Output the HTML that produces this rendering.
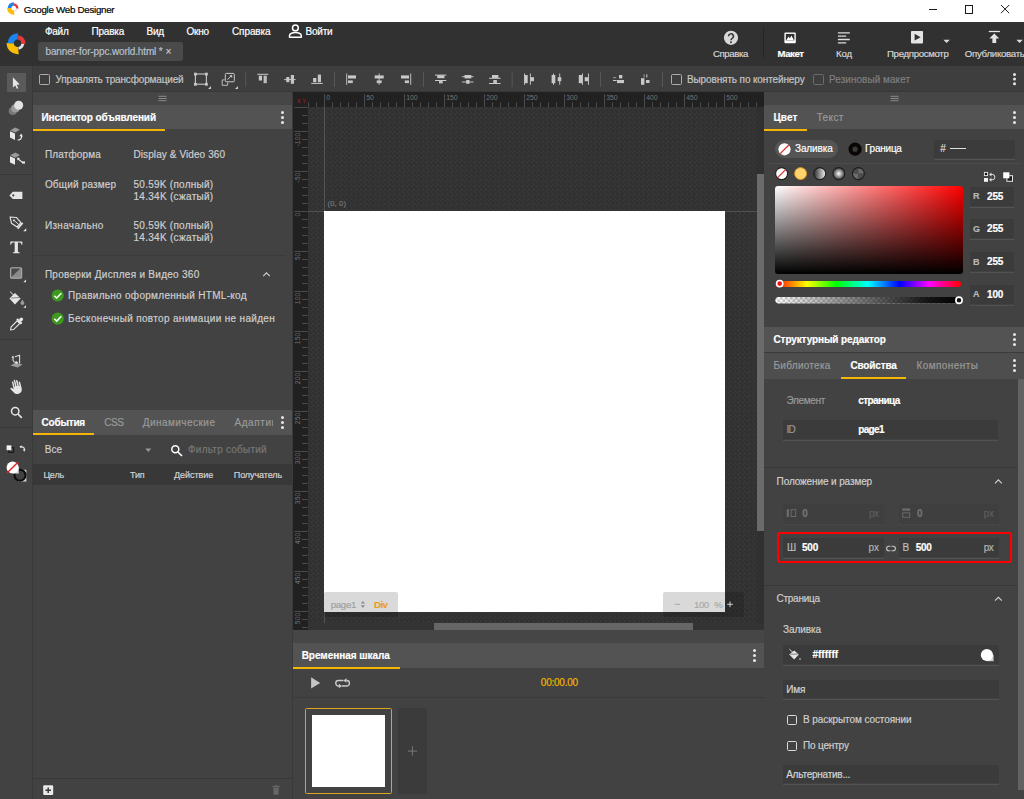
<!DOCTYPE html>
<html><head><meta charset="utf-8">
<style>
*{box-sizing:border-box;margin:0;padding:0}
html,body{width:1024px;height:799px;overflow:hidden;background:#424242;font-family:"Liberation Sans",sans-serif;font-size:10px;color:#dcdcdc}
.a,svg{position:absolute}
.t{position:absolute;white-space:nowrap;line-height:12px;-webkit-text-stroke:.18px currentColor}
.ph{position:absolute;background:#535353}
.yl{position:absolute;height:2px;background:#f4b400}
.ln{position:absolute;height:1px;background:#373737}
.fld{position:absolute;background:#3b3b3b;background-clip:content-box;padding-bottom:1px;border-bottom:1px solid #525252}
.cb{position:absolute;width:11px;height:11px;border:1.500px solid #adadad;border-radius:1.600px}
.kb{position:absolute;width:3px;height:3px;border-radius:50%;background:#e6e6e6;box-shadow:0 5px 0 #e6e6e6,0 10px 0 #e6e6e6}
.sep{position:absolute;width:1px;background:#555}
#stage{left:293px;top:92px;width:471px;height:538px;background:repeating-conic-gradient(#2f2f2f 0 25%,#373737 0 50%) 0 0/4.800px 4.800px;overflow:hidden}
</style></head><body>
<!-- title bar -->
<div class="a" style="left:0;top:0;width:1024px;height:22px;background:#fff"></div>
<!-- header -->
<div class="a" style="left:0;top:22px;width:1024px;height:44px;background:#313131"></div>
<div class="a" style="left:38px;top:42px;width:145px;height:19px;background:#4a4a4a;border-radius:2px"></div>
<div class="sep" style="left:763px;top:27px;height:31px;background:#252525"></div>
<!-- options bar -->
<div class="a" style="left:0;top:66px;width:1024px;height:26px;background:#3e3e3e"></div>
<div class="a" style="left:33px;top:91.400px;width:991px;height:1px;background:#373737"></div>
<!-- tools column -->
<div class="a" style="left:0;top:66px;width:33px;height:733px;background:#424242;border-right:1px solid #393939"></div>
<div class="a" style="left:6.600px;top:73px;width:19px;height:19px;background:#5a5a5a"></div>
<div class="ln" style="left:0;top:174px;width:33px"></div>
<div class="ln" style="left:0;top:339px;width:33px"></div>
<div class="ln" style="left:0;top:427px;width:33px"></div>
<!-- left panel -->
<div class="a" style="left:33px;top:92px;width:259px;height:13px;background:#464646"></div>
<div class="ph" style="left:33px;top:105px;width:259px;height:24px"></div>
<div class="yl" style="left:33px;top:129px;width:132px"></div>
<div class="kb" style="left:281px;top:111px"></div>
<div class="ln" style="left:33px;top:255px;width:253px;background:#3b3b3b"></div>
<div class="ph" style="left:33px;top:410px;width:259px;height:25px"></div>
<div class="yl" style="left:33px;top:433.300px;width:61.300px"></div>
<div class="kb" style="left:281px;top:416px"></div>
<div class="a" style="left:33px;top:464px;width:259px;height:21px;background:#383838"></div>
<div class="ln" style="left:33px;top:778px;width:259px;background:#383838"></div>
<div class="a" style="left:292px;top:92px;width:1px;height:707px;background:#3a3a3a"></div>
<!-- stage -->
<div id="stage" class="a">
 <div class="a" style="left:31px;top:15px;width:1px;height:516px;background:#545454"></div>
 <div class="a" style="left:15px;top:119px;width:449px;height:1px;background:#525252"></div>
 <div class="a" style="left:31px;top:119.200px;width:400.700px;height:400.700px;background:#fff"></div>
 <div class="a" style="left:0;top:0;width:471px;height:15px;background:#212121"></div>
 <div class="a" style="left:0;top:15px;width:14.600px;height:523px;background:#212121"></div>
 <div class="a" style="left:31px;top:500px;width:74px;height:24.500px;background:rgba(0,0,0,.15);border-radius:2px"></div>
 <div class="a" style="left:370px;top:500px;width:81px;height:25px;background:rgba(0,0,0,.15);border-radius:2px"></div>
 <div class="a" style="left:464px;top:15px;width:7px;height:516px;background:#303030"></div>
 <div class="a" style="left:464px;top:82px;width:7px;height:357px;background:#6b6b6b"></div>
 <div class="a" style="left:14.600px;top:530.800px;width:457px;height:7.200px;background:#333"></div>
 <div class="a" style="left:141.400px;top:530.800px;width:259px;height:7.200px;background:#666"></div>
</div>
<!-- timeline -->
<div class="a" style="left:293px;top:630px;width:471px;height:13px;background:#464646"></div>
<div class="ph" style="left:293px;top:643px;width:471px;height:25px"></div>
<div class="yl" style="left:293px;top:666.500px;width:106.600px"></div>
<div class="kb" style="left:753px;top:649px"></div>
<div class="ln" style="left:293px;top:697px;width:471px;background:#393939"></div>
<div class="a" style="left:305px;top:707.700px;width:87px;height:86.500px;border:1px solid #dba520;border-radius:1.500px"></div>
<div class="a" style="left:312px;top:715px;width:72.700px;height:72.200px;background:#fff"></div>
<div class="a" style="left:398.300px;top:707.700px;width:28.400px;height:86.500px;background:#3b3b3b;border-radius:2px"></div>
<!-- right panel -->
<div class="a" style="left:764px;top:92px;width:260px;height:13px;background:#464646"></div>
<div class="ph" style="left:764px;top:105px;width:260px;height:24px"></div>
<div class="yl" style="left:764px;top:129px;width:43px"></div>
<div class="kb" style="left:1013px;top:111px"></div>
<div class="a" style="left:775px;top:140px;width:63px;height:18px;border-radius:9px;background:#555"></div>
<div class="fld" style="left:934px;top:140.300px;width:81px;height:19.400px"></div>
<div class="a" style="left:950px;top:148px;width:16px;height:1px;background:#ddd"></div>
<div class="ln" style="left:768px;top:162.500px;width:252px;background:#4c4c4c"></div>
<div class="a" style="left:775.200px;top:186.400px;width:188px;height:88px;border-radius:3px;background:linear-gradient(to top,#000,rgba(0,0,0,0)),linear-gradient(to right,#fff,#f00)"></div>
<div class="a" style="left:775.400px;top:280.700px;width:186px;height:6.800px;border-radius:3.400px;background:linear-gradient(to right,#f00,#ff0 17%,#0f0 33%,#0ff 50%,#00f 67%,#f0f 83%,#f00)"></div>
<div class="fld" style="left:969.600px;top:187px;width:44.700px;height:20.500px"></div>
<div class="fld" style="left:969.600px;top:219px;width:44.700px;height:20.500px"></div>
<div class="fld" style="left:969.600px;top:252.100px;width:44.700px;height:20.500px"></div>
<div class="fld" style="left:969.600px;top:285px;width:44.700px;height:20.500px"></div>
<div class="ph" style="left:764px;top:327px;width:260px;height:25px"></div>
<div class="kb" style="left:1013px;top:333px"></div>
<div class="a" style="left:764px;top:352px;width:260px;height:27px;background:#4e4e4e;border-top:1px solid #3a3a3a"></div>
<div class="yl" style="left:841px;top:377px;width:65px"></div>
<div class="kb" style="left:1013px;top:359px"></div>
<div class="a" style="left:1017.500px;top:378.600px;width:6.500px;height:411px;background:#626262"></div>
<div class="fld" style="left:783px;top:420px;width:215px;height:20.500px"></div>
<div class="ln" style="left:764px;top:467px;width:253px"></div>
<div class="fld" style="left:783px;top:504px;width:101px;height:20.500px;background:#3f3f3f;border-bottom:1px dotted #4d4d4d"></div>
<div class="fld" style="left:899px;top:504px;width:100px;height:20.500px;background:#3f3f3f;border-bottom:1px dotted #4d4d4d"></div>
<div class="fld" style="left:783px;top:538px;width:101px;height:20.500px"></div>
<div class="fld" style="left:899px;top:538px;width:100px;height:20.500px"></div>
<div class="a" style="left:777px;top:531.5px;width:234.5px;height:31.5px;border:2.6px solid #f00;border-radius:3px"></div>
<div class="ln" style="left:764px;top:585px;width:253px"></div>
<div class="fld" style="left:783px;top:645.200px;width:215.500px;height:20.500px"></div>
<div class="fld" style="left:783px;top:679.800px;width:215.500px;height:20.500px"></div>
<div class="cb" style="left:786.700px;top:715.100px;width:10px;height:10px;border-color:#dadada"></div>
<div class="cb" style="left:786.700px;top:740.900px;width:10px;height:10px;border-color:#dadada"></div>
<div class="fld" style="left:783px;top:765.200px;width:215.500px;height:20.300px"></div>
<!-- options-bar checkboxes -->
<div class="cb" style="left:38.800px;top:74.200px"></div>
<div class="cb" style="left:670.500px;top:74.200px"></div>
<div class="cb" style="left:812.500px;top:74.200px;border-color:#6c6c6c"></div>
<div class="kb" style="left:1013px;top:73px;box-shadow:0 4.600px 0 #e6e6e6,0 9.200px 0 #e6e6e6"></div>
<!-- title logo -->
<svg style="left:5px;top:0px" width="16" height="18" viewBox="5 0 16 18"><path d="M14.39 14.66A6.60 6.60 0 0 1 7.10 7.98L11.42 8.06A2.28 2.28 0 0 0 13.94 10.37Z" fill="#fbbc05"/><path d="M7.76 8.10A5.94 5.94 0 0 1 13.91 2.16L13.78 5.82A2.28 2.28 0 0 0 11.42 8.10Z" fill="#1a84f0"/><path d="M13.78 3.36A4.74 4.74 0 0 1 18.39 8.76L15.96 8.42A2.28 2.28 0 0 0 13.74 5.82Z" fill="#e03a3a"/><path d="M17.63 8.58A3.96 3.96 0 0 1 14.39 12.00L14.10 10.35A2.28 2.28 0 0 0 15.96 8.38Z" fill="#e2e2e2"/></svg>
<div class="a" style="left:929px;top:9px;width:8px;height:1px;background:#1a1a1a"></div>
<div class="a" style="left:964.5px;top:5px;width:8.5px;height:8.5px;border:1px solid #1a1a1a"></div>
<svg style="left:1000px;top:4px" width="10" height="10" viewBox="0 0 10 10"><path d="M1 1L9.2 9.2M9.2 1L1 9.2" stroke="#1a1a1a" stroke-width="1"/></svg>
<!-- header logo -->
<svg style="left:4px;top:30px" width="26" height="28" viewBox="4 30 26 28"><path d="M18.75 54.14A11.00 11.00 0 0 1 6.60 43.01L13.80 43.13A3.80 3.80 0 0 0 18.00 46.98Z" fill="#fbbc05"/><path d="M7.70 43.20A9.90 9.90 0 0 1 17.95 33.31L17.73 39.40A3.80 3.80 0 0 0 13.80 43.20Z" fill="#1a84f0"/><path d="M17.74 35.30A7.90 7.90 0 0 1 25.42 44.30L21.36 43.73A3.80 3.80 0 0 0 17.67 39.40Z" fill="#e03a3a"/><path d="M24.15 44.00A6.60 6.60 0 0 1 18.75 49.70L18.26 46.94A3.80 3.80 0 0 0 21.37 43.66Z" fill="#e2e2e2"/></svg>
<!-- person -->
<svg style="left:288px;top:23px" width="15" height="16" viewBox="0 0 15 16"><circle cx="7.4" cy="4.9" r="2.9" fill="none" stroke="#fff" stroke-width="1.5"/><path d="M1.5 14.2V12.6C1.5 10.6 5 9.5 7.4 9.5S13.3 10.6 13.3 12.6V14.2Z" fill="none" stroke="#fff" stroke-width="1.5" stroke-linejoin="round"/></svg>
<!-- help -->
<svg style="left:723px;top:30px" width="16" height="16" viewBox="0 0 16 16"><circle cx="8" cy="7.8" r="7.1" fill="#d8d8d8"/><path d="M5.6 6.3A2.4 2.4 0 1 1 9.2 8.3C8.3 8.9 8 9.3 8 10.2" fill="none" stroke="#313131" stroke-width="1.5"/><circle cx="8" cy="12.2" r="0.95" fill="#313131"/></svg>
<!-- layout -->
<svg style="left:784px;top:32px" width="12" height="12" viewBox="0 0 12 12"><rect x=".4" y=".5" width="11.4" height="10.8" rx="1" fill="#fff"/><rect x="1.8" y="1.9" width="8.6" height="6.4" fill="#313131"/><path d="M2.4 8L4.6 4.4L6 6.4L7.4 3.6L9.8 8Z" fill="#fff"/></svg>
<!-- code -->
<svg style="left:837px;top:31px" width="14" height="14" viewBox="0 0 14 14"><path d="M.9 1.8H12.8M.9 5.1H9.2M.9 8.5H12.8M.9 11.8H9.2" stroke="#dcdcdc" stroke-width="1.3"/></svg>
<!-- preview -->
<svg style="left:910px;top:30px" width="14" height="14" viewBox="0 0 14 14"><rect x="1" y="1.1" width="12" height="12.3" rx=".8" fill="#e4e4e4"/><path d="M4.6 3.8V10.6L10.6 7.2Z" fill="#313131"/></svg>
<svg style="left:943px;top:39px" width="8" height="5" viewBox="0 0 8 5"><path d="M.4 .8H6.8L3.6 4Z" fill="#dcdcdc"/></svg>
<!-- publish -->
<svg style="left:988px;top:30px" width="13" height="14" viewBox="0 0 13 14"><path d="M.8 1.5H11.9" stroke="#e4e4e4" stroke-width="1.3"/><path d="M6.3 3.6L11.2 8.6H8.2V13H4.4V8.6H1.4Z" fill="#e4e4e4"/></svg>
<svg style="left:1016px;top:39px" width="8" height="5" viewBox="0 0 8 5"><path d="M.4 .8H6.8L3.6 4Z" fill="#dcdcdc"/></svg>
<!-- left panel icons (page coords) -->
<svg style="left:33px;top:92px" width="260" height="707" viewBox="33 92 260 707">
<path d="M158.600 96.300H166.600M158.600 98.500H166.600M158.600 100.700H166.600" stroke="#8a8a8a" stroke-width="1"/>
<path d="M263.200 276.200L266.500 272.900L269.800 276.200" fill="none" stroke="#cfcfcf" stroke-width="1.200"/>
<circle cx="57.700" cy="295.500" r="6.100" fill="#3d9a1e"/><path d="M54.300 295.700L56.700 298L61.300 293.200" fill="none" stroke="#fff" stroke-width="1.500"/>
<circle cx="57.700" cy="318.600" r="6.100" fill="#3d9a1e"/><path d="M54.300 318.800L56.700 321.100L61.300 316.300" fill="none" stroke="#fff" stroke-width="1.500"/>
<path d="M145.300 448.600H151.300L148.300 452Z" fill="#9a9a9a"/>
<circle cx="175.300" cy="449.300" r="3.500" fill="none" stroke="#fff" stroke-width="1.500"/><path d="M177.900 452L182 456" stroke="#fff" stroke-width="1.700"/>
<rect x="43.200" y="785.300" width="10" height="9.700" rx="1.200" fill="#e9e9e9"/><path d="M48.200 787.400V793M45.400 790.200H51" stroke="#3a3a3a" stroke-width="1.500"/>
<path d="M273.200 787.400H279L278.500 794.800H273.700Z" fill="#666"/><rect x="272.400" y="785.900" width="7.400" height="1.100" fill="#666"/><rect x="274.800" y="785.200" width="2.600" height="1" fill="#666"/>
</svg>
<!-- options bar icons: one svg in page coords -->
<svg style="left:0;top:66px" width="700" height="26" viewBox="0 66 700 26" shape-rendering="auto">
<g fill="#c9c9c9">
<!-- transform -->
<rect x="195.4" y="74" width="11" height="10.2" fill="none" stroke="#c9c9c9" stroke-width="1.1"/>
<rect x="194" y="72.7" width="2.8" height="2.8"/><rect x="205" y="72.7" width="2.8" height="2.8"/><rect x="194" y="82.9" width="2.8" height="2.8"/><rect x="205" y="82.9" width="2.8" height="2.8"/>
<path d="M211 86V89H208Z"/>
<!-- resize -->
<rect x="225.3" y="73.4" width="9" height="8.4" rx="1" fill="none" stroke="#c9c9c9" stroke-width="1"/>
<path d="M224.6 79.9H222.2V85.3H227.6V82.6" fill="none" stroke="#bdbdbd" stroke-width="1"/>
<path d="M227.4 79.6L231.6 75.6" stroke="#c9c9c9" stroke-width="1" fill="none"/><path d="M229.3 75.2H232.2V78.1Z"/>
<path d="M238 86V89H235Z"/>
<!-- align top -->
<rect x="257.2" y="73.8" width="11" height="1"/><rect x="258.8" y="75.7" width="3.2" height="4.8"/><rect x="263.6" y="75.7" width="3.2" height="7.5" fill="#bdbdbd"/>
<!-- align vcenter -->
<rect x="284.2" y="79.1" width="11.4" height="1"/><rect x="286.3" y="77" width="3" height="5.2"/><rect x="290.8" y="75" width="3.2" height="8.8" fill="#c4c4c4"/>
<!-- align bottom -->
<rect x="311.2" y="82.9" width="11.6" height="1"/><rect x="313.1" y="78" width="3.2" height="4.2"/><rect x="317.8" y="74.6" width="3.2" height="7.6" fill="#c4c4c4"/>
<!-- align left -->
<rect x="346.2" y="73.5" width="1" height="11.3" fill="#bdbdbd"/><rect x="348" y="75.4" width="8" height="3.1"/><rect x="348" y="80.4" width="4.8" height="2.7" fill="#c4c4c4"/>
<!-- align hcenter -->
<rect x="378.6" y="73.5" width="1" height="11.3" fill="#bdbdbd"/><rect x="374.7" y="75.4" width="9" height="3.1"/><rect x="376.7" y="80.4" width="5" height="2.7" fill="#c4c4c4"/>
<!-- align right -->
<rect x="410.2" y="73.5" width="1" height="11.3" fill="#bdbdbd"/><rect x="401" y="75.4" width="8" height="3.1"/><rect x="404.8" y="80.4" width="4.2" height="2.7" fill="#c4c4c4"/>
<!-- dist top -->
<rect x="435" y="74.6" width="11.3" height="1"/><rect x="437.2" y="75.2" width="7.2" height="3"/><rect x="435" y="80" width="11.3" height="1"/><rect x="439" y="80.6" width="3.7" height="2.8" fill="#c4c4c4"/>
<!-- dist vcenter -->
<rect x="461.9" y="76.2" width="11.7" height="1" fill="#bdbdbd"/><rect x="464.5" y="75" width="6.8" height="3.4"/><rect x="461.9" y="81.5" width="11.7" height="1" fill="#bdbdbd"/><rect x="466.2" y="80" width="3.3" height="3.8"/>
<!-- dist bottom -->
<rect x="492" y="75" width="6.4" height="3"/><rect x="489" y="77.8" width="11.6" height="1"/><rect x="493.3" y="80" width="3.6" height="3.2" fill="#c4c4c4"/><rect x="489" y="83" width="11.6" height="1"/>
<!-- dist left -->
<rect x="524" y="73.5" width="1" height="11.3" fill="#bdbdbd"/><rect x="524.6" y="75" width="3.1" height="8.2"/><rect x="529.9" y="73.5" width="1" height="11.3" fill="#bdbdbd"/><rect x="530.5" y="77.2" width="3.5" height="4"/>
<!-- dist hcenter -->
<rect x="553" y="73.5" width="1" height="11.3" fill="#bdbdbd"/><rect x="551.6" y="75" width="3.7" height="8.2"/><rect x="559.2" y="73.5" width="1" height="11.3" fill="#bdbdbd"/><rect x="557.7" y="77.2" width="3.6" height="4"/>
<!-- dist right -->
<rect x="578.8" y="75" width="3.4" height="8.2"/><rect x="582" y="73.5" width="1" height="11.3" fill="#bdbdbd"/><rect x="584.7" y="77.2" width="3.4" height="4" /><rect x="588" y="73.5" width="1" height="11.3" fill="#bdbdbd"/>
<!-- icon A -->
<rect x="619" y="75" width="3.3" height="3.4"/><rect x="613" y="77.2" width="3.2" height="1" fill="#9a9a9a"/><rect x="613" y="80" width="3.6" height="1"/><rect x="617" y="80" width="7" height="3.1"/>
<!-- icon B -->
<rect x="641" y="78.2" width="3.4" height="6.6"/><rect x="643.6" y="74.3" width="1" height="3.2" fill="#9a9a9a"/><rect x="646.3" y="74.3" width="1" height="3.2"/><rect x="646" y="80" width="3.5" height="3"/>
</g>
<g fill="#565656">
<rect x="245.2" y="71.5" width="1" height="15.5"/><rect x="334" y="71.5" width="1" height="15.5"/><rect x="423" y="71.5" width="1" height="15.5"/><rect x="511.7" y="71.5" width="1" height="15.5"/><rect x="600" y="71.5" width="1" height="15.5"/><rect x="662" y="71.5" width="1" height="15.5"/>
</g>
</svg>
<!-- right panel icons (page coords) -->
<svg style="left:764px;top:92px" width="260" height="707" viewBox="764 92 260 707">
<defs>
<linearGradient id="lg1" x1="0" x2="1" y1="0" y2="0"><stop offset="0" stop-color="#2a2a2a"/><stop offset="1" stop-color="#f4f4f4"/></linearGradient>
<radialGradient id="rg1"><stop offset="0" stop-color="#fff"/><stop offset="1" stop-color="#3a3a3a"/></radialGradient>
<pattern id="ck" width="5" height="5" patternUnits="userSpaceOnUse" x="775" y="297"><rect width="5" height="5" fill="#fff"/><rect width="2.500" height="2.500" fill="#cfcfcf"/><rect x="2.500" y="2.500" width="2.500" height="2.500" fill="#cfcfcf"/></pattern>
<linearGradient id="ag" x1="0" x2="1"><stop offset="0" stop-color="#000" stop-opacity="0"/><stop offset=".25" stop-color="#000" stop-opacity=".3"/><stop offset=".8" stop-color="#000" stop-opacity=".9"/><stop offset="1" stop-color="#000"/></linearGradient>
<clipPath id="c5"><circle cx="858.400" cy="173.600" r="5.600"/></clipPath>
</defs>
<path d="M890.600 96.300H898.600M890.600 98.500H898.600M890.600 100.700H898.600" stroke="#8a8a8a" stroke-width="1"/>
<!-- fill / stroke icons -->
<circle cx="784.500" cy="149.300" r="6.100" fill="#fff"/><path d="M780.200 153.600L788.800 145" stroke="#d83030" stroke-width="1.300"/>
<circle cx="855.100" cy="149.200" r="4.600" fill="#3a3a3a" stroke="#0b0606" stroke-width="4"/>
<!-- swatches row -->
<circle cx="781.600" cy="173.600" r="6" fill="#fff" stroke="#1e1e1e" stroke-width="1.100"/><path d="M777.600 177.600L785.600 169.600" stroke="#d83030" stroke-width="1.300"/>
<circle cx="800.600" cy="173.600" r="6" fill="#fdd56c" stroke="#d98a2a" stroke-width="1"/>
<circle cx="819.700" cy="173.600" r="6" fill="url(#lg1)" stroke="#1e1e1e" stroke-width="1.100"/>
<circle cx="838.800" cy="173.600" r="6" fill="url(#rg1)" stroke="#1e1e1e" stroke-width="1.100"/>
<g clip-path="url(#c5)"><rect x="852" y="167" width="6.400" height="6.600" fill="#4c4c4c"/><rect x="858.400" y="167" width="7" height="6.600" fill="#6c6c6c"/><rect x="852" y="173.600" width="6.400" height="7" fill="#6c6c6c"/><rect x="858.400" y="173.600" width="7" height="7" fill="#4c4c4c"/></g>
<circle cx="858.400" cy="173.600" r="6" fill="none" stroke="#1e1e1e" stroke-width="1.100"/>
<!-- swap icons -->
<rect x="984.400" y="172.400" width="3.200" height="3.200" fill="#111" stroke="#e8e8e8" stroke-width=".900"/><rect x="984" y="178" width="4" height="3.800" fill="#f4f4f4"/>
<path d="M990.400 174.400H992.200A2.700 2.700 0 0 1 992.200 179.800H990.400" fill="none" stroke="#e0e0e0" stroke-width="1"/><path d="M991.400 172.400L989 174.400L991.400 176.400ZM991.400 177.800L989 179.800L991.400 181.800Z" fill="#e0e0e0"/>
<rect x="1006.900" y="175.700" width="5.600" height="5.600" fill="#1c1c1c" stroke="#e8e8e8" stroke-width="1"/><rect x="1003.200" y="172.300" width="6.200" height="6" fill="#fff"/>
<!-- alpha bar + handles -->
<rect x="775.400" y="297" width="186.600" height="6.600" rx="3.300" fill="url(#ck)"/><rect x="775.400" y="297" width="186.600" height="6.600" rx="3.300" fill="url(#ag)"/>
<circle cx="779.700" cy="283.600" r="3.100" fill="#ee1111" stroke="#fff" stroke-width="1.600"/>
<circle cx="959" cy="300.200" r="3.100" fill="#111" stroke="#fff" stroke-width="1.700"/>
<!-- chevrons -->
<path d="M995 483.300L998.400 479.900L1001.800 483.300" fill="none" stroke="#cfcfcf" stroke-width="1.200"/>
<path d="M995 600.700L998.400 597.300L1001.800 600.700" fill="none" stroke="#cfcfcf" stroke-width="1.200"/>
<!-- x / y icons -->
<rect x="786.700" y="509.200" width="2.300" height="7.800" fill="#6a6a6a"/><rect x="791.100" y="509.700" width="4.600" height="6.800" fill="none" stroke="#6a6a6a" stroke-width="1"/>
<rect x="902.200" y="508.400" width="8" height="2.400" fill="#6a6a6a"/><rect x="902.700" y="512.900" width="7" height="4.400" fill="none" stroke="#6a6a6a" stroke-width="1"/>
<!-- link -->
<path d="M890.500 546.200H888.900A2.300 2.300 0 0 0 888.900 550.800H890.500M891.500 546.200H893.100A2.300 2.300 0 0 1 893.100 550.800H891.500" fill="none" stroke="#c4c4c4" stroke-width="1.100"/>
<!-- bucket small -->
<path d="M789.200 654.600L794.200 650.400L798.800 654.400L794.200 659.600Z" fill="#e6e6e6"/><path d="M789.400 649.200L795 654.400" stroke="#e6e6e6" stroke-width=".900"/><path d="M790.400 654.300L797.800 654" stroke="#3a3a3a" stroke-width=".600"/><circle cx="800" cy="659" r="1" fill="#9a9a9a"/>
<!-- white swatch -->
<path d="M987 655H993.600V661.200H987Z" fill="#cfcfcf"/><circle cx="986.900" cy="655" r="6.100" fill="#fff"/>
</svg>
<!-- stage rulers (page coords) -->
<svg style="left:293px;top:92px" width="471" height="538" viewBox="293 92 471 538">
<path d="M308.5 102.4V107M316.5 102.4V107M324.5 94.2V107M332.5 102.4V107M340.5 102.4V107M348.5 102.4V107M356.5 102.4V107M364.5 94.2V107M372.5 102.4V107M380.5 102.4V107M388.5 102.4V107M396.5 102.4V107M404.5 94.2V107M412.5 102.4V107M420.5 102.4V107M428.5 102.4V107M436.5 102.4V107M444.5 94.2V107M452.5 102.4V107M460.5 102.4V107M468.5 102.4V107M476.5 102.4V107M484.5 94.2V107M492.5 102.4V107M500.5 102.4V107M508.5 102.4V107M516.5 102.4V107M524.5 94.2V107M532.5 102.4V107M540.5 102.4V107M548.5 102.4V107M556.5 102.4V107M564.5 94.2V107M572.5 102.4V107M580.5 102.4V107M588.5 102.4V107M596.5 102.4V107M604.5 94.2V107M612.5 102.4V107M620.5 102.4V107M628.5 102.4V107M636.5 102.4V107M644.5 94.2V107M652.5 102.4V107M660.5 102.4V107M668.5 102.4V107M676.5 102.4V107M684.5 94.2V107M692.5 102.4V107M700.5 102.4V107M708.5 102.4V107M716.5 102.4V107M724.5 94.2V107M732.5 102.4V107M740.5 102.4V107M748.5 102.4V107M756.5 102.4V107" stroke="#4c4c4c" stroke-width="1" fill="none"/>
<path d="M302 115.5H307.6M302 123.5H307.6M294.4 131.5H307.6M302 139.5H307.6M302 147.5H307.6M302 155.5H307.6M302 163.5H307.6M294.4 171.5H307.6M302 179.5H307.6M302 187.5H307.6M302 195.5H307.6M302 203.5H307.6M294.4 211.5H307.6M302 219.5H307.6M302 227.5H307.6M302 235.5H307.6M302 243.5H307.6M294.4 251.5H307.6M302 259.5H307.6M302 267.5H307.6M302 275.5H307.6M302 283.5H307.6M294.4 291.5H307.6M302 299.5H307.6M302 307.5H307.6M302 315.5H307.6M302 323.5H307.6M294.4 331.5H307.6M302 339.5H307.6M302 347.5H307.6M302 355.5H307.6M302 363.5H307.6M294.4 371.5H307.6M302 379.5H307.6M302 387.5H307.6M302 395.5H307.6M302 403.5H307.6M294.4 411.5H307.6M302 419.5H307.6M302 427.5H307.6M302 435.5H307.6M302 443.5H307.6M294.4 451.5H307.6M302 459.5H307.6M302 467.5H307.6M302 475.5H307.6M302 483.5H307.6M294.4 491.5H307.6M302 499.5H307.6M302 507.5H307.6M302 515.5H307.6M302 523.5H307.6M294.4 531.5H307.6M302 539.5H307.6M302 547.5H307.6M302 555.5H307.6M302 563.5H307.6M294.4 571.5H307.6M302 579.5H307.6M302 587.5H307.6M302 595.5H307.6M302 603.5H307.6M294.4 611.5H307.6M302 619.5H307.6M302 627.5H307.6" stroke="#4c4c4c" stroke-width="1" fill="none"/>
<path d="M294.400 107.500H307.600" stroke="#4c4c4c" stroke-width="1"/>
<g font-family="Liberation Sans, sans-serif" font-size="6.800" fill="#747474">
<text x="326.2" y="100.200">0</text>
<text x="366.2" y="100.200">50</text>
<text x="406.2" y="100.200">100</text>
<text x="446.2" y="100.200">150</text>
<text x="486.2" y="100.200">200</text>
<text x="526.2" y="100.200">250</text>
<text x="566.2" y="100.200">300</text>
<text x="606.2" y="100.200">350</text>
<text x="646.2" y="100.200">400</text>
<text x="686.2" y="100.200">450</text>
<text x="726.2" y="100.200">500</text>
<text transform="translate(300.400 132.8) rotate(-90)" text-anchor="end">-100</text>
<text transform="translate(300.400 172.8) rotate(-90)" text-anchor="end">-50</text>
<text transform="translate(300.400 212.8) rotate(-90)" text-anchor="end">0</text>
<text transform="translate(300.400 252.8) rotate(-90)" text-anchor="end">50</text>
<text transform="translate(300.400 292.8) rotate(-90)" text-anchor="end">100</text>
<text transform="translate(300.400 332.8) rotate(-90)" text-anchor="end">150</text>
<text transform="translate(300.400 372.8) rotate(-90)" text-anchor="end">200</text>
<text transform="translate(300.400 412.8) rotate(-90)" text-anchor="end">250</text>
<text transform="translate(300.400 452.8) rotate(-90)" text-anchor="end">300</text>
<text transform="translate(300.400 492.8) rotate(-90)" text-anchor="end">350</text>
<text transform="translate(300.400 532.8) rotate(-90)" text-anchor="end">400</text>
<text transform="translate(300.400 572.8) rotate(-90)" text-anchor="end">450</text>
<text transform="translate(300.400 612.8) rotate(-90)" text-anchor="end">500</text>
</g>
<text x="297" y="103.400" font-family="Liberation Sans, sans-serif" font-size="5.600" font-weight="bold" fill="#8c1e1e" letter-spacing="1.600">XY</text>
<path d="M360.700 603.600L362.900 601L365.100 603.600ZM360.700 605.300L362.900 607.900L365.100 605.300Z" fill="#8c8c8c"/>
<path d="M674.800 604.300H680" stroke="#a8a8a8" stroke-width="1"/>
<path d="M727.200 604.300H732.800M730 601.500V607.100" stroke="#d0d0d0" stroke-width="1"/>
</svg>
<!-- timeline icons (page coords) -->
<svg style="left:293px;top:630px" width="471" height="169" viewBox="293 630 471 169">
<path d="M296 636.300H304" stroke="none"/>
<path d="M311.100 677.200V688.500L320.200 682.900Z" fill="#c4c4c4"/>
<path d="M343.400 680.500H338.500A2.750 2.750 0 0 0 338.500 686H339M341.800 686H346.700A2.750 2.750 0 0 0 346.700 680.500H346.400" fill="none" stroke="#cacaca" stroke-width="1.400"/>
<path d="M343.300 680.500L346.500 678.300V682.700ZM342 686L338.800 683.800V688.200Z" fill="#cacaca"/>
<path d="M407.800 751.100H417M412.400 746.500V755.700" stroke="#777" stroke-width="1"/>
</svg>
<!-- tool column icons (page coords) -->
<svg style="left:0;top:66px" width="33" height="430" viewBox="0 66 33 430">
<!-- arrow -->
<path d="M12.9 77.2V87.6L15.3 85.4L16.9 88.8L18.3 88.2L16.7 84.8L19.8 84.5Z" fill="#e6e6e6"/>
<!-- motion path -->
<circle cx="12.7" cy="110.9" r="4" fill="#777"/><circle cx="15.4" cy="108.4" r="4.1" fill="#9c9c9c"/><circle cx="18.7" cy="105.3" r="4.5" fill="#e2e2e2"/>
<!-- 3d rotate -->
<path d="M10.200 130.200L15.200 127.400L20 129.800L15.200 132.600Z" fill="#9a9a9a"/><path d="M10 131.200L15 133.600V140L10 137.600Z" fill="#e9e9e9"/>
<path d="M21.100 134.800C22.600 137.800 20.600 140.200 17.600 140" fill="none" stroke="#e6e6e6" stroke-width="1.200"/><path d="M19.300 136.200L21.300 133.600L22.900 136.600Z" fill="#e6e6e6"/>
<!-- 3d translate -->
<path d="M10.200 155.200L15.200 152.600L20 154.900L15.200 157.700Z" fill="#9a9a9a"/><path d="M10 156.200L15 158.600V164.800L10 162.400Z" fill="#e9e9e9"/>
<path d="M17.600 158.600L22.600 162.400" stroke="#e6e6e6" stroke-width="1.200"/><path d="M17 157.400L20 158L17.600 160.400Z" fill="#e6e6e6"/><path d="M22 161.400H25V163.600H22Z" fill="#e6e6e6"/>
<!-- tag -->
<path d="M9.400 195.400L12.800 191.800H22.400V199H12.800Z" fill="#e6e6e6"/><circle cx="13.300" cy="195.400" r="1.100" fill="#424242"/>
<!-- pen -->
<g transform="translate(14.700 221) rotate(131) scale(.860)"><path d="M-3.400 -6.600L3.400 -6.600L4.400 1.200L0 7.200L-4.400 1.200Z" fill="none" stroke="#e6e6e6" stroke-width="1.300" stroke-linejoin="round"/><path d="M0 -6V0.600" stroke="#e6e6e6" stroke-width="1"/><circle cx="0" cy="1.200" r="1.100" fill="#e6e6e6"/><rect x="-4.400" y="-9.400" width="8.800" height="2" fill="#e6e6e6"/></g>
<path d="M26.200 228.200V231.200H23.200Z" fill="#e6e6e6"/>
<!-- T -->
<path d="M10.300 241.400H22.300V244.800H21.500C21.300 243.400 20.700 242.600 19.300 242.600H17.900V251.200C17.900 252 18.300 252.300 19.700 252.400V253.200H12.900V252.400C14.300 252.300 14.700 252 14.700 251.200V242.600H13.300C11.900 242.600 11.300 243.400 11.100 244.800H10.300Z" fill="#e6e6e6"/>
<!-- rect/gradient -->
<rect x="10.600" y="267.800" width="11" height="10.400" rx="1" fill="#8a8a8a" stroke="#a6a6a6" stroke-width="1.2"/><path d="M11.300 268.500H20.400L11.300 277Z" fill="#4a4a4a"/>
<path d="M26 279.600V282.200H23.400Z" fill="#e6e6e6"/>
<!-- bucket -->
<path d="M9.400 298.400L15 293L20.600 298.400L15 304.400Z" fill="#e6e6e6"/><path d="M10 291.600L16.400 297.800" stroke="#e6e6e6" stroke-width="1"/><path d="M11 298L19.800 297.600" stroke="#424242" stroke-width=".6"/>
<path d="M22.400 299.600C23.600 301.400 24.200 302.400 24.200 303.200A1.800 1.800 0 0 1 20.600 303.200C20.600 302.400 21.200 301.400 22.400 299.600Z" fill="#9a9a9a"/>
<path d="M26 305.200V307.800H23.400Z" fill="#e6e6e6"/>
<!-- eyedropper -->
<g transform="translate(16 324.600) rotate(45)"><rect x="-1.700" y="-9.300" width="3.400" height="4" rx="1.600" fill="#e6e6e6"/><rect x="-3.300" y="-5.700" width="6.600" height="2.200" fill="#e6e6e6"/><path d="M-1.800 -3.500H1.800V5.200L0 7.600L-1.800 5.200Z" fill="none" stroke="#e6e6e6" stroke-width="1.100"/></g>
<!-- 3d stage rotate -->
<path d="M10.600 365.600L15.400 362.800L22.600 364.400L17.600 367.600Z" fill="#9c9c9c"/><path d="M15 356.800L19.600 355.200V363.600" fill="none" stroke="#dcdcdc" stroke-width="1.100"/><path d="M13 357.400C12.400 361 14 363 17.400 362.600" fill="none" stroke="#dcdcdc" stroke-width="1.100"/><path d="M15.600 360.800L18.400 362.600L15.800 364.400Z" fill="#dcdcdc"/><path d="M11.400 357.400L13 355.400L14.400 358Z" fill="#dcdcdc"/>
<!-- hand -->
<path transform="rotate(-14 16 387)" d="M13.200 381.700C13.200 380.600 14.600 380.600 14.600 381.700V386.400H15.300V380.400C15.300 379.300 16.800 379.300 16.800 380.400V386.400H17.500V381.100C17.500 380 19 380 19 381.100V386.800H19.700V383.300C19.700 382.200 21.200 382.200 21.200 383.300V389.600C21.200 392.400 19.400 394.200 16.800 394.200C14.800 394.200 13.600 393.300 12.600 391.700L10.300 387.900C9.700 386.800 11 386.100 11.800 387L13.200 388.700Z" fill="#e6e6e6"/>
<!-- zoom -->
<circle cx="15.200" cy="411.200" r="3.700" fill="none" stroke="#e6e6e6" stroke-width="1.500"/><path d="M18 414L21.800 417.800" stroke="#e6e6e6" stroke-width="1.700"/>
<!-- swap small -->
<rect x="8.800" y="447.600" width="4.800" height="4.800" fill="none" stroke="#1a1a1a" stroke-width="1.200"/><rect x="6.600" y="445.400" width="4.800" height="4.800" fill="#f2f2f2"/>
<path d="M20.200 447.200C22.600 446.200 24.800 447.600 24.400 450" fill="none" stroke="#e6e6e6" stroke-width="1.100"/><path d="M19.400 446.200L21.800 445.600L21.400 448.200Z" fill="#e6e6e6"/><path d="M22.800 449.600H25.600L24.200 451.800Z" fill="#e6e6e6"/>
<!-- fill / stroke -->
<path d="M15 469.800H26.400V481.600H18Z" fill="#d0d0d0"/>
<circle cx="20" cy="475.200" r="5.500" fill="#404040" stroke="#0c0c0c" stroke-width="2"/>
<path d="M13.400 466.600H18.800V473.600H13.400Z" fill="#d8d8d8"/>
<circle cx="12.600" cy="467.400" r="6" fill="#fff"/><path d="M7 473L18.200 462" stroke="#f01818" stroke-width="1.400"/>
</svg>

<div class="t" style="left:23.8px;top:3.9px;font-size:9.8px;color:#000;letter-spacing:-0.30px;">Google Web Designer</div>
<div class="t" style="left:45.0px;top:25.5px;font-size:10px;color:#ffffff;letter-spacing:-0.27px;">Файл</div>
<div class="t" style="left:91.5px;top:25.5px;font-size:10px;color:#ffffff;letter-spacing:-0.21px;">Правка</div>
<div class="t" style="left:146.5px;top:25.5px;font-size:10px;color:#ffffff;letter-spacing:-0.20px;">Вид</div>
<div class="t" style="left:186.5px;top:25.5px;font-size:10px;color:#ffffff;letter-spacing:-0.19px;">Окно</div>
<div class="t" style="left:232.0px;top:25.5px;font-size:10px;color:#ffffff;letter-spacing:-0.10px;">Справка</div>
<div class="t" style="left:305.5px;top:25.5px;font-size:10px;color:#ffffff;letter-spacing:-0.20px;">Войти</div>
<div class="t" style="left:45.5px;top:46.1px;font-size:10px;color:#b7c0d0;letter-spacing:-0.13px;">banner-for-ppc.world.html *</div>
<div class="t" style="left:165.5px;top:46.1px;font-size:10px;color:#cfcfcf;letter-spacing:0.16px;">×</div>
<div class="t" style="left:713.0px;top:48.0px;font-size:9.6px;color:#d6d6d6;letter-spacing:-0.38px;">Справка</div>
<div class="t" style="left:777.5px;top:48.0px;font-size:9.6px;color:#ffffff;font-weight:bold;letter-spacing:-0.43px;">Макет</div>
<div class="t" style="left:836.0px;top:48.0px;font-size:9.6px;color:#d6d6d6;letter-spacing:-0.10px;">Код</div>
<div class="t" style="left:887.0px;top:48.0px;font-size:9.6px;color:#d6d6d6;letter-spacing:-0.30px;">Предпросмотр</div>
<div class="t" style="left:964.8px;top:48.0px;font-size:9.6px;color:#d6d6d6;letter-spacing:-0.25px;">Опубликовать</div>
<div class="t" style="left:55.5px;top:73.6px;font-size:10px;color:#c6c6c6;letter-spacing:-0.16px;">Управлять трансформацией</div>
<div class="t" style="left:687.0px;top:73.6px;font-size:10px;color:#c6c6c6;letter-spacing:-0.12px;">Выровнять по контейнеру</div>
<div class="t" style="left:829.0px;top:73.6px;font-size:10px;color:#7e7e7e;letter-spacing:0.04px;">Резиновый макет</div>
<div class="t" style="left:41.4px;top:111.5px;font-size:10px;color:#ffffff;font-weight:bold;letter-spacing:-0.10px;">Инспектор объявлений</div>
<div class="t" style="left:44.9px;top:148.5px;font-size:10px;color:#cfcfcf;letter-spacing:0.15px;">Платформа</div>
<div class="t" style="left:133.5px;top:148.5px;font-size:10px;color:#cfcfcf;letter-spacing:0.09px;">Display &amp; Video 360</div>
<div class="t" style="left:44.9px;top:178.8px;font-size:10px;color:#cfcfcf;letter-spacing:0.18px;">Общий размер</div>
<div class="t" style="left:133.5px;top:178.8px;font-size:10px;color:#cfcfcf;letter-spacing:0.26px;">50.59K (полный)</div>
<div class="t" style="left:133.5px;top:190.6px;font-size:10px;color:#cfcfcf;letter-spacing:0.29px;">14.34K (сжатый)</div>
<div class="t" style="left:44.9px;top:219.5px;font-size:10px;color:#cfcfcf;letter-spacing:0.33px;">Изначально</div>
<div class="t" style="left:133.5px;top:219.5px;font-size:10px;color:#cfcfcf;letter-spacing:0.26px;">50.59K (полный)</div>
<div class="t" style="left:133.5px;top:231.8px;font-size:10px;color:#cfcfcf;letter-spacing:0.29px;">14.34K (сжатый)</div>
<div class="t" style="left:44.9px;top:268.5px;font-size:10px;color:#cfcfcf;letter-spacing:0.28px;">Проверки Дисплея и Видео 360</div>
<div class="t" style="left:68.0px;top:289.9px;font-size:10px;color:#cfcfcf;letter-spacing:0.29px;">Правильно оформленный HTML-код</div>
<div class="t" style="left:68.0px;top:313.1px;font-size:10px;color:#cfcfcf;letter-spacing:0.33px;">Бесконечный повтор анимации не найден</div>
<div class="t" style="left:41.6px;top:416.9px;font-size:10px;color:#ffffff;font-weight:bold;letter-spacing:-0.22px;">События</div>
<div class="t" style="left:104.3px;top:416.9px;font-size:10px;color:#9a9a9a;letter-spacing:-0.49px;">CSS</div>
<div class="t" style="left:142.7px;top:416.9px;font-size:10px;color:#9a9a9a;letter-spacing:0.46px;">Динамические</div>
<div class="t" style="left:234.4px;top:416.9px;font-size:10px;color:#9a9a9a;letter-spacing:0.59px;width:38.6px;overflow:hidden;">Адаптив</div>
<div class="t" style="left:44.8px;top:443.9px;font-size:10px;color:#cfcfcf;letter-spacing:-0.01px;">Все</div>
<div class="t" style="left:188.0px;top:443.9px;font-size:10px;color:#777777;letter-spacing:0.23px;">Фильтр событий</div>
<div class="t" style="left:43.4px;top:469.0px;font-size:9px;color:#d6d6d6;letter-spacing:-0.18px;">Цель</div>
<div class="t" style="left:130.0px;top:469.0px;font-size:9px;color:#d6d6d6;letter-spacing:-0.21px;">Тип</div>
<div class="t" style="left:174.0px;top:469.0px;font-size:9px;color:#d6d6d6;letter-spacing:-0.03px;">Действие</div>
<div class="t" style="left:233.8px;top:469.0px;font-size:9px;color:#d6d6d6;letter-spacing:-0.10px;">Получатель</div>
<div class="t" style="left:330.8px;top:598.5px;font-size:9.6px;color:#a0a0a0;letter-spacing:-0.30px;">page1</div>
<div class="t" style="left:374.1px;top:598.6px;font-size:9.6px;color:#e8a020;font-weight:bold;letter-spacing:-0.61px;">Div</div>
<div class="t" style="left:694.0px;top:598.5px;font-size:9.6px;color:#a8a8a8;letter-spacing:-0.44px;">100</div>
<div class="t" style="left:714.3px;top:598.5px;font-size:9.6px;color:#a8a8a8;letter-spacing:-0.90px;">%</div>
<div class="t" style="left:327.5px;top:198.4px;font-size:7.5px;color:#787878;letter-spacing:0.18px;">(0, 0)</div>
<div class="t" style="left:301.7px;top:650.0px;font-size:10px;color:#ffffff;font-weight:bold;letter-spacing:-0.04px;">Временная шкала</div>
<div class="t" style="left:540.8px;top:677.2px;font-size:10px;color:#f4b400;letter-spacing:-0.23px;">00:00.00</div>
<div class="t" style="left:773.5px;top:111.7px;font-size:10px;color:#ffffff;font-weight:bold;letter-spacing:0.06px;">Цвет</div>
<div class="t" style="left:816.7px;top:111.7px;font-size:10px;color:#9a9a9a;letter-spacing:0.38px;">Текст</div>
<div class="t" style="left:795.0px;top:143.4px;font-size:10px;color:#ffffff;letter-spacing:-0.13px;">Заливка</div>
<div class="t" style="left:865.0px;top:143.4px;font-size:10px;color:#ffffff;letter-spacing:-0.24px;">Граница</div>
<div class="t" style="left:940.3px;top:143.4px;font-size:10px;color:#d6d6d6;letter-spacing:-0.56px;">#</div>
<div class="t" style="left:973.0px;top:190.4px;font-size:9px;color:#b8b8b8;font-weight:bold;letter-spacing:-0.70px;">R</div>
<div class="t" style="left:987.0px;top:190.5px;font-size:10px;color:#ffffff;font-weight:bold;letter-spacing:-0.13px;">255</div>
<div class="t" style="left:973.0px;top:223.0px;font-size:9px;color:#b8b8b8;font-weight:bold;letter-spacing:-0.90px;">G</div>
<div class="t" style="left:987.0px;top:223.1px;font-size:10px;color:#ffffff;font-weight:bold;letter-spacing:-0.13px;">255</div>
<div class="t" style="left:973.0px;top:255.6px;font-size:9px;color:#b8b8b8;font-weight:bold;letter-spacing:-0.70px;">B</div>
<div class="t" style="left:987.0px;top:255.7px;font-size:10px;color:#ffffff;font-weight:bold;letter-spacing:-0.13px;">255</div>
<div class="t" style="left:973.0px;top:288.4px;font-size:9px;color:#b8b8b8;font-weight:bold;letter-spacing:-0.70px;">A</div>
<div class="t" style="left:987.0px;top:288.5px;font-size:10px;color:#ffffff;font-weight:bold;letter-spacing:-0.13px;">100</div>
<div class="t" style="left:773.5px;top:333.8px;font-size:10px;color:#ffffff;font-weight:bold;letter-spacing:-0.11px;">Структурный редактор</div>
<div class="t" style="left:773.5px;top:360.1px;font-size:10px;color:#9a9a9a;letter-spacing:0.28px;">Библиотека</div>
<div class="t" style="left:850.4px;top:360.1px;font-size:10px;color:#ffffff;font-weight:bold;letter-spacing:-0.15px;">Свойства</div>
<div class="t" style="left:916.4px;top:360.1px;font-size:10px;color:#9a9a9a;letter-spacing:0.43px;">Компоненты</div>
<div class="t" style="left:786.6px;top:394.5px;font-size:10px;color:#9a9a9a;letter-spacing:-0.34px;">Элемент</div>
<div class="t" style="left:858.2px;top:394.5px;font-size:10px;color:#ffffff;font-weight:bold;letter-spacing:-0.57px;">страница</div>
<div class="t" style="left:786.6px;top:423.9px;font-size:10px;color:#9a9a9a;letter-spacing:-0.90px;">ID</div>
<div class="t" style="left:858.2px;top:423.9px;font-size:10px;color:#ffffff;font-weight:bold;letter-spacing:-0.64px;">page1</div>
<div class="t" style="left:776.6px;top:475.5px;font-size:10px;color:#cfcfcf;letter-spacing:-0.12px;">Положение и размер</div>
<div class="t" style="left:802.2px;top:507.7px;font-size:10px;color:#757575;font-weight:bold;letter-spacing:-0.26px;">0</div>
<div class="t" style="left:868.9px;top:507.7px;font-size:10px;color:#5e5e5e;letter-spacing:-0.48px;">px</div>
<div class="t" style="left:917.0px;top:507.7px;font-size:10px;color:#757575;font-weight:bold;letter-spacing:-0.26px;">0</div>
<div class="t" style="left:983.6px;top:507.7px;font-size:10px;color:#5e5e5e;letter-spacing:-0.23px;">px</div>
<div class="t" style="left:786.9px;top:541.6px;font-size:10px;color:#bdbdbd;letter-spacing:-0.90px;">Ш</div>
<div class="t" style="left:802.0px;top:541.6px;font-size:10px;color:#ffffff;font-weight:bold;letter-spacing:-0.23px;">500</div>
<div class="t" style="left:868.6px;top:541.6px;font-size:10px;color:#b4b4b4;letter-spacing:-0.23px;">px</div>
<div class="t" style="left:902.5px;top:541.6px;font-size:10px;color:#bdbdbd;letter-spacing:-0.90px;">В</div>
<div class="t" style="left:915.7px;top:541.6px;font-size:10px;color:#ffffff;font-weight:bold;letter-spacing:-0.33px;">500</div>
<div class="t" style="left:983.8px;top:541.6px;font-size:10px;color:#b4b4b4;letter-spacing:-0.58px;">px</div>
<div class="t" style="left:776.4px;top:593.0px;font-size:10px;color:#cfcfcf;letter-spacing:-0.22px;">Страница</div>
<div class="t" style="left:783.0px;top:624.0px;font-size:10px;color:#cfcfcf;letter-spacing:-0.07px;">Заливка</div>
<div class="t" style="left:812.4px;top:648.8px;font-size:10px;color:#ffffff;font-weight:bold;letter-spacing:0.04px;">#ffffff</div>
<div class="t" style="left:786.2px;top:683.7px;font-size:10px;color:#d6d6d6;letter-spacing:-0.09px;">Имя</div>
<div class="t" style="left:803.0px;top:714.1px;font-size:10px;color:#cfcfcf;letter-spacing:-0.08px;">В раскрытом состоянии</div>
<div class="t" style="left:803.0px;top:739.6px;font-size:10px;color:#cfcfcf;letter-spacing:-0.17px;">По центру</div>
<div class="t" style="left:786.2px;top:769.4px;font-size:10px;color:#d6d6d6;letter-spacing:-0.24px;">Альтернатив...</div>
</body></html>
